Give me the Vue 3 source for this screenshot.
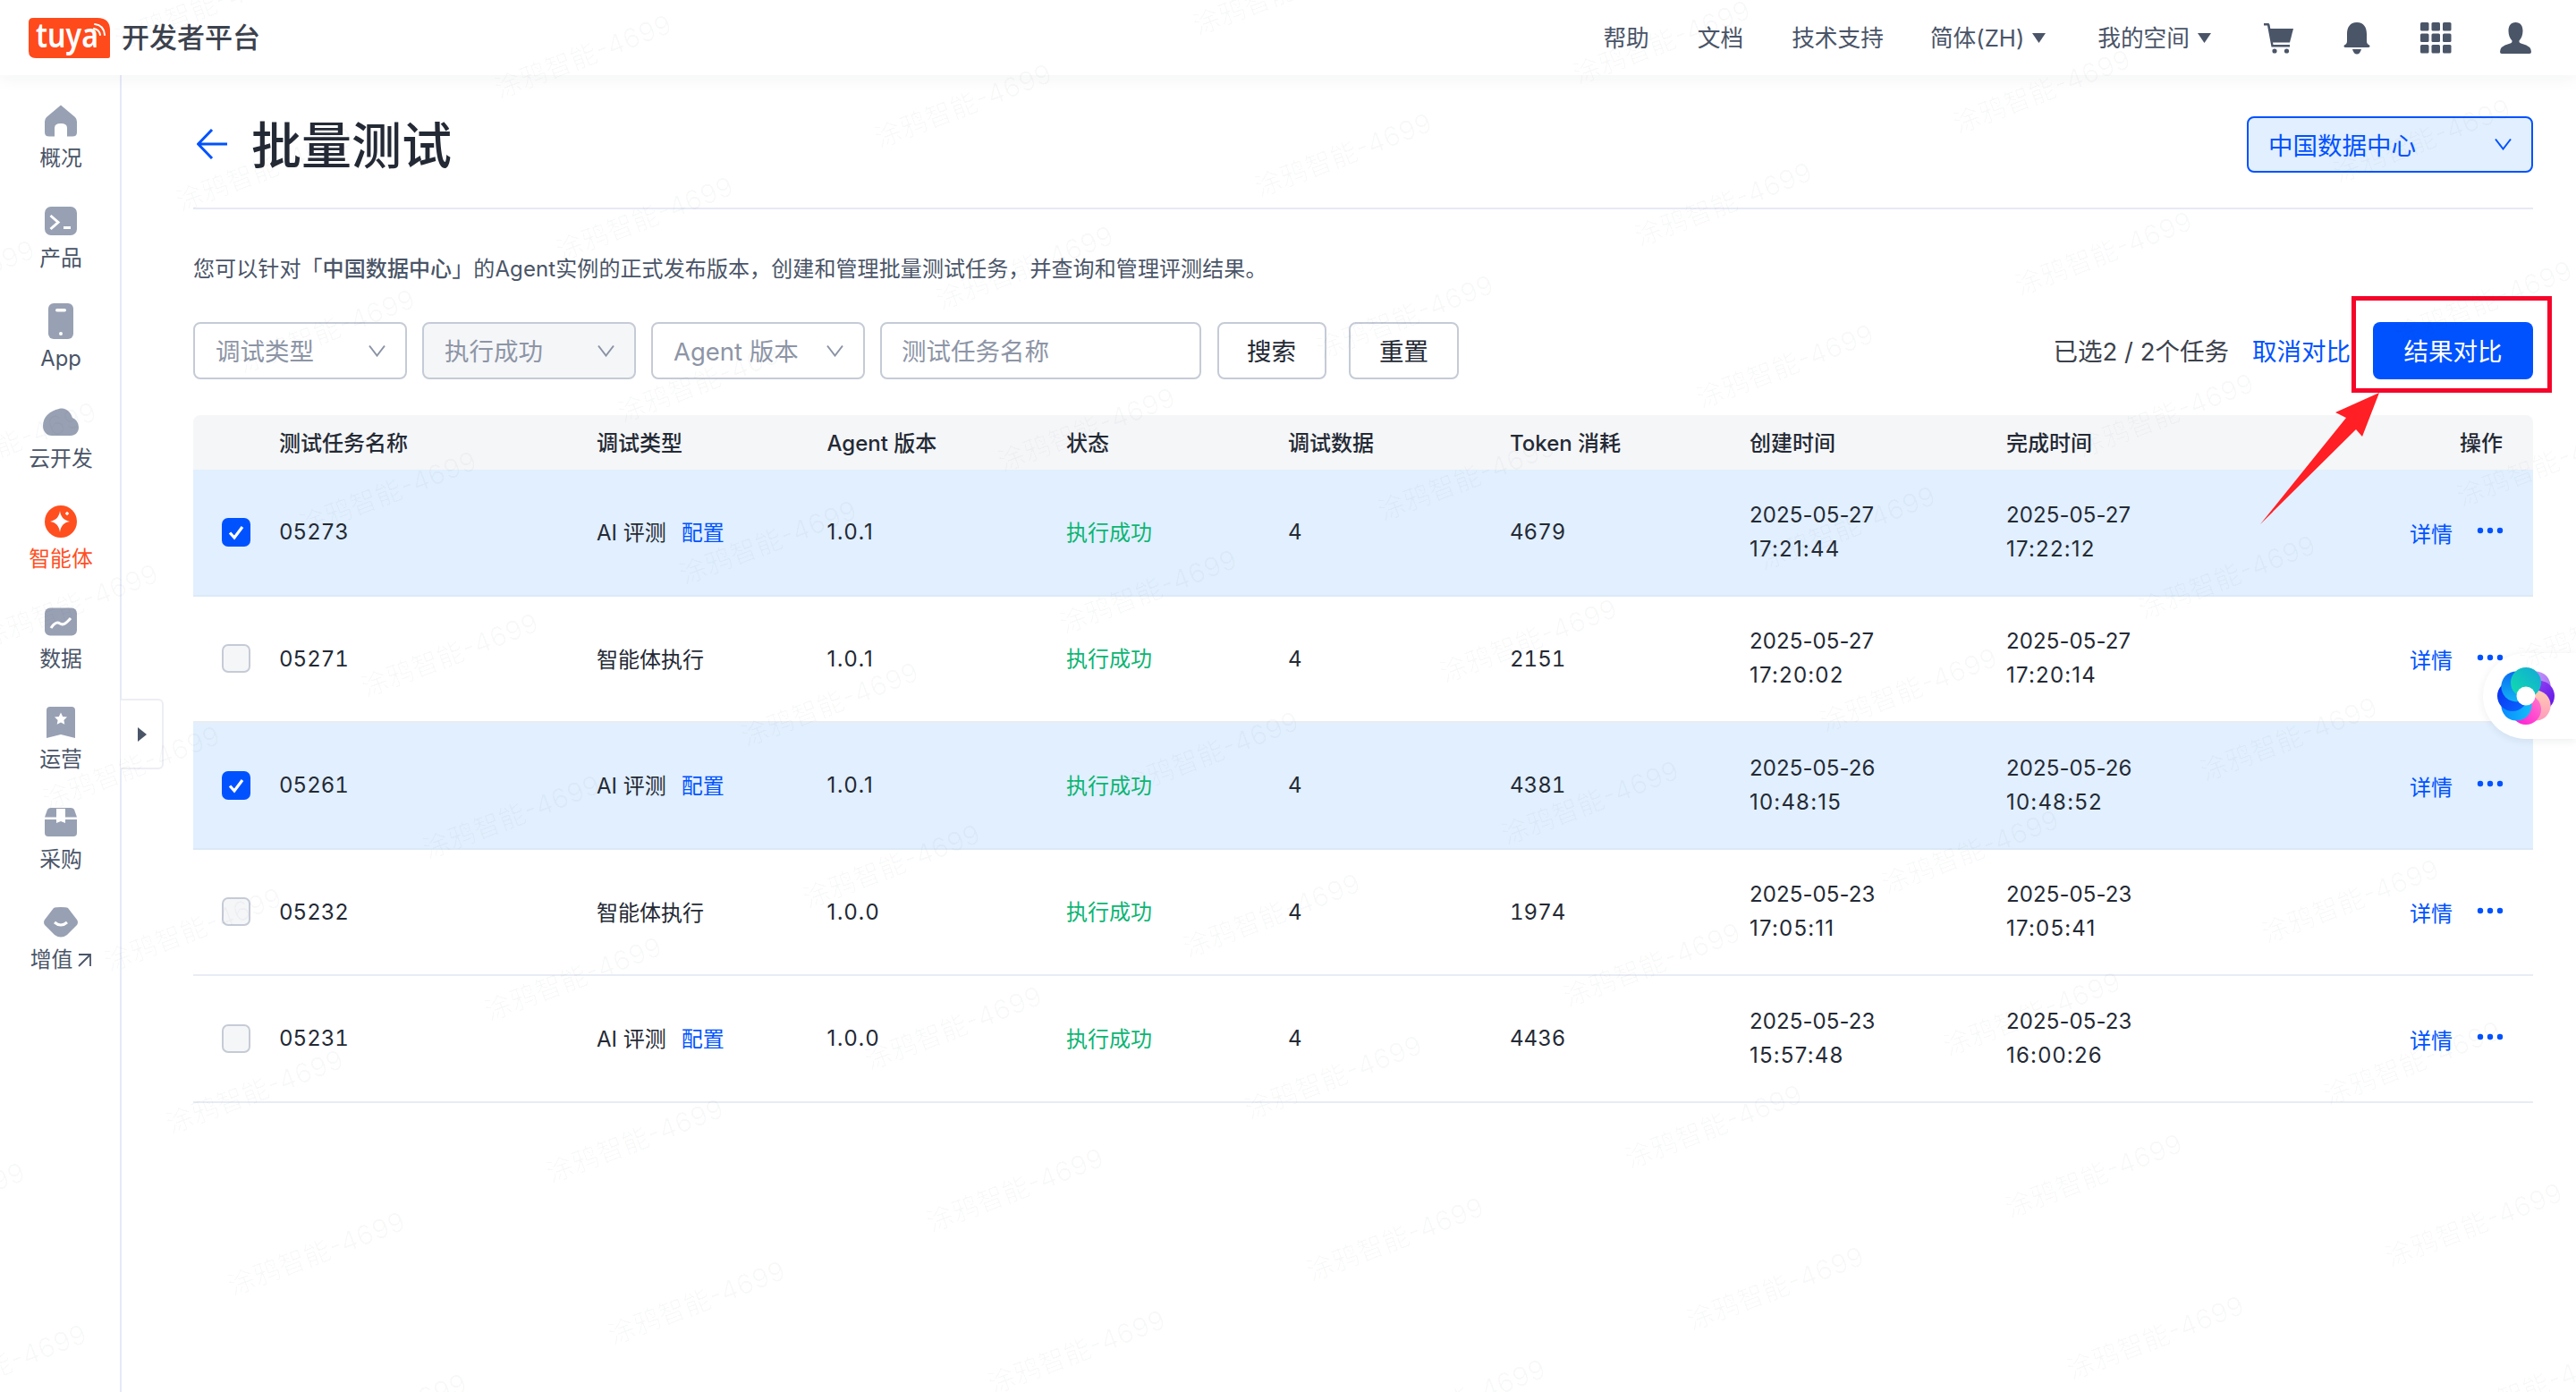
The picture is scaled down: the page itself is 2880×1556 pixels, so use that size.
<script setup>
const rows = [
  { id: '05273', type: 'AI 评测', config: true, ver: '1.0.1', token: '4679', c: ['2025-05-27', '17:21:44'], d: ['2025-05-27', '17:22:12'], on: true },
  { id: '05271', type: '智能体执行', config: false, ver: '1.0.1', token: '2151', c: ['2025-05-27', '17:20:02'], d: ['2025-05-27', '17:20:14'], on: false },
  { id: '05261', type: 'AI 评测', config: true, ver: '1.0.1', token: '4381', c: ['2025-05-26', '10:48:15'], d: ['2025-05-26', '10:48:52'], on: true },
  { id: '05232', type: '智能体执行', config: false, ver: '1.0.0', token: '1974', c: ['2025-05-23', '17:05:11'], d: ['2025-05-23', '17:05:41'], on: false },
  { id: '05231', type: 'AI 评测', config: true, ver: '1.0.0', token: '4436', c: ['2025-05-23', '15:57:48'], d: ['2025-05-23', '16:00:26'], on: false },
]
const heads = ['测试任务名称', '调试类型', 'Agent 版本', '状态', '调试数据', 'Token 消耗', '创建时间', '完成时间']
const filters = [
  { label: '调试类型', filled: false },
  { label: '执行成功', filled: true },
  { label: 'Agent 版本', filled: false },
]
const marks = []
for (let i = -4; i < 9; i++) {
  for (let j = -9; j < 3; j++) {
    const x = 353 + i * 425 + j * 69
    const y = 1399 + i * 55 + j * 181
    if (x > -150 && x < 3030 && y > -80 && y < 1640) marks.push({ x, y })
  }
}
const petals = [
  { a: 45, from: '#e6c4fb', to: '#a266f5' },
  { a: 90, from: '#a04df5', to: '#5a10e6' },
  { a: 135, from: '#ffd8b0', to: '#ff8fc0' },
  { a: 180, from: '#ff7fc8', to: '#ff12d8' },
  { a: 225, from: '#12c8f8', to: '#0a80ff' },
  { a: 270, from: '#0a6cff', to: '#0a28f0' },
  { a: 315, from: '#12c4f0', to: '#0a5cf5' },
  { a: 0, from: '#10e0a8', to: '#12a8d8' },
]
</script>

<template>
  <div class="page">
    <header class="topbar">
      <div class="brand">
        <svg class="logo" width="91" height="45" viewBox="0 0 91 45">
          <path d="M5 0H77Q91 0 91 14V43Q91 45 89 45H8Q0 45 0 37V5Q0 0 5 0Z" fill="#ff4a1c" />
          <text x="8" y="33" class="logo-text" textLength="70" lengthAdjust="spacingAndGlyphs">tuya</text>
          <path d="M73 12Q79 13 80 19M74 7Q84 8 85 19" fill="none" stroke="#fff" stroke-width="2" stroke-linecap="round" />
        </svg>
        <span class="brand-name">开发者平台</span>
      </div>
      <nav class="topnav">
        <span>帮助</span>
        <span>文档</span>
        <span>技术支持</span>
        <span class="drop first">简体(ZH)
          <svg width="15" height="11" viewBox="0 0 15 11"><path d="M0 0H15L7.500 11Z" fill="#4a5568" /></svg>
        </span>
        <span class="drop">我的空间
          <svg width="15" height="11" viewBox="0 0 15 11"><path d="M0 0H15L7.500 11Z" fill="#4a5568" /></svg>
        </span>
        <svg class="cart" width="33" height="34" viewBox="0 0 33 34" fill="#4a5568">
          <path d="M0 0H5.500L6.500 1.500L10.500 24H29V26.500H8.500L4 2.500H0Z" />
          <path d="M6.500 6H33L29 21.500H9.500Z" />
          <circle cx="12" cy="31" r="2.600" /><circle cx="25.500" cy="31" r="2.600" />
        </svg>
        <svg class="bell" width="30" height="36" viewBox="0 0 30 36" fill="#4a5568">
          <path d="M15 0C23 0 26 6 26 13V21Q26 24 29 25.500Q30.500 27.500 28 28H2Q-.5 27.500 1 25.500Q4 24 4 21V13C4 6 7 0 15 0Z" />
          <path d="M10 30H20Q18.500 35.500 15 35.500Q11.500 35.500 10 30Z" />
        </svg>
        <svg class="grid" width="35" height="35" viewBox="0 0 35 35" fill="#4a5568">
          <rect x="0" y="0" width="9.500" height="9.500" rx="1.500" /><rect x="12.500" y="0" width="9.500" height="9.500" rx="1.500" /><rect x="25" y="0" width="9.500" height="9.500" rx="1.500" />
          <rect x="0" y="12.500" width="9.500" height="9.500" rx="1.500" /><rect x="12.500" y="12.500" width="9.500" height="9.500" rx="1.500" /><rect x="25" y="12.500" width="9.500" height="9.500" rx="1.500" />
          <rect x="0" y="25" width="9.500" height="9.500" rx="1.500" /><rect x="12.500" y="25" width="9.500" height="9.500" rx="1.500" /><rect x="25" y="25" width="9.500" height="9.500" rx="1.500" />
        </svg>
        <svg width="35" height="35" viewBox="0 0 35 35" fill="#4a5568">
          <path d="M17.500 0C23 0 25.500 4 25.500 9.500C25.500 14 24 18 21.500 20.500V21.500Q21.500 23 25 24Q35 26.500 35 33Q35 35 33 35H2Q0 35 0 33Q0 26.500 10 24Q13.500 23 13.500 21.500V20.500C11 18 9.500 14 9.500 9.500C9.500 4 12 0 17.500 0Z" />
        </svg>
      </nav>
    </header>

    <div class="body">
      <aside class="sidebar">
        <div class="side-item">
          <svg class="side-icon" viewBox="0 0 40 40"><path d="M20 2.500L36 16Q38 18 38 21V33Q38 37.500 33 37.500H27V28Q27 23 20 23Q13 23 13 28V37.500H7Q2 37.500 2 33V21Q2 18 4 16Z" /></svg>
          <span class="side-label">概况</span>
        </div>
        <div class="side-item">
          <svg class="side-icon" viewBox="0 0 40 40"><rect x="2" y="4" width="36" height="32" rx="7" /><path d="M8.500 14L17 21.500L8.500 29" class="ink" /><path d="M23 27.500H31" class="ink" /></svg>
          <span class="side-label">产品</span>
        </div>
        <div class="side-item">
          <svg class="side-icon" viewBox="0 0 40 40"><rect x="6" y="0" width="28" height="40" rx="6" /><rect x="14" y="6" width="12" height="3.500" rx="1.700" fill="#fff" /><circle cx="20" cy="34" r="2" fill="#fff" /></svg>
          <span class="side-label">App</span>
        </div>
        <div class="side-item">
          <svg class="side-icon" viewBox="0 0 40 40"><path d="M10 36C4 36 0 31 0 25C0 15 8 8 18 6C26 4 31 10 33 16C38 18 40 23 40 27C40 32 36 36 31 36Z" /></svg>
          <span class="side-label">云开发</span>
        </div>
        <div class="side-item active">
          <svg class="side-icon" viewBox="0 0 40 40"><ellipse cx="20" cy="20" rx="18" ry="18" fill="#ff4f1f" /><path d="M19 8C20 15 23 18 30 20C23 21 20 25 19 32C18 25 15 21 8 20C15 18 18 15 19 8Z" fill="#fff" /><path d="M27 9V13M25 11H29" stroke="#fff" stroke-width="1.500" fill="none" /></svg>
          <span class="side-label">智能体</span>
        </div>
        <div class="side-item">
          <svg class="side-icon" viewBox="0 0 40 40"><rect x="2" y="4.500" width="36" height="31" rx="6" /><path d="M9 27C13 21 16 20 19 22C22 24 25 23 31 16" class="ink" /></svg>
          <span class="side-label">数据</span>
        </div>
        <div class="side-item">
          <svg class="side-icon" viewBox="0 0 40 40"><path d="M8 3H32Q36 3 36 7V38L20 34L4 38V7Q4 3 8 3Z" /><path d="M20 9.500L22.100 14L27 14.600L23.400 17.900L24.300 22.800L20 20.400L15.700 22.800L16.600 17.900L13 14.600L17.900 14Z" fill="#fff" /></svg>
          <span class="side-label">运营</span>
        </div>
        <div class="side-item">
          <svg class="side-icon" viewBox="0 0 40 40"><path d="M9 4H31Q34 4 35 6L38 14.500H2L5 6Q6 4 9 4Z" /><path d="M2 17H38V32Q38 36 34 36H6Q2 36 2 32Z" /><path d="M15 5H25V21L20 19L15 21Z" fill="#fff" /></svg>
          <span class="side-label">采购</span>
        </div>
        <div class="side-item">
          <svg class="side-icon" viewBox="0 0 40 40"><path d="M12 4Q14 3 20 3Q26 3 28 4L38 17Q40 20 38 23L27 34Q20 39 13 34L2 23Q0 20 2 17Z" /><path d="M13 20Q20 26 27 20" class="ink" /></svg>
          <span class="side-label">增值
            <svg width="15" height="15" viewBox="0 0 15 15"><path d="M1 1H14V14M14 1L1 14" fill="none" stroke="#4a5568" stroke-width="1.800" /></svg>
          </span>
        </div>
      </aside>

      <main class="main">
        <div class="page-head">
          <div class="title-wrap">
            <svg class="back" width="34" height="34" viewBox="0 0 34 34"><path d="M17 1L1.500 17L17 33M1.500 17H34" fill="none" stroke="#0052ff" stroke-width="3" /></svg>
            <h1 class="title">批量测试</h1>
          </div>
          <div class="region">
            <span>中国数据中心</span>
            <svg width="19" height="14" viewBox="0 0 19 14"><path d="M1 1.500L9.500 12.500L18 1.500" fill="none" stroke="#0052ff" stroke-width="2" /></svg>
          </div>
        </div>

        <p class="desc">您可以针对「<b>中国数据中心</b>」的Agent实例的正式发布版本，创建和管理批量测试任务，并查询和管理评测结果。</p>

        <div class="toolbar">
          <div v-for="f in filters" :key="f.label" class="select" :class="{ filled: f.filled }">
            <span class="ph">{{ f.label }}</span>
            <svg width="19" height="14" viewBox="0 0 19 14"><path d="M1 1.500L9.500 12.500L18 1.500" fill="none" stroke="#8a93a6" stroke-width="2" /></svg>
          </div>
          <div class="input"><span class="ph">测试任务名称</span></div>
          <button class="btn">搜索</button>
          <button class="btn reset">重置</button>
          <div class="tool-right">
            <span class="count">已选2 / 2个任务</span>
            <span class="cancel">取消对比</span>
            <button class="primary">结果对比</button>
          </div>
        </div>

        <div class="table">
          <div class="tr thead">
            <div></div>
            <div v-for="h in heads" :key="h" class="th">{{ h }}</div>
            <div class="th op-head">操作</div>
          </div>
          <div v-for="r in rows" :key="r.id" class="tr row" :class="{ on: r.on }">
            <div class="check-cell">
              <span class="check" :class="{ checked: r.on }">
                <svg v-if="r.on" width="20" height="18" viewBox="0 0 20 18"><path d="M3 9.500L8 15L17 3" fill="none" stroke="#fff" stroke-width="3.200" /></svg>
              </span>
            </div>
            <div class="num">{{ r.id }}</div>
            <div class="type">
              <span>{{ r.type }}</span>
              <span v-if="r.config" class="link">配置</span>
            </div>
            <div class="ver">{{ r.ver }}</div>
            <div class="ok">执行成功</div>
            <div class="num">4</div>
            <div class="num">{{ r.token }}</div>
            <div class="dt"><div class="date">{{ r.c[0] }}</div><div class="time">{{ r.c[1] }}</div></div>
            <div class="dt"><div class="date">{{ r.d[0] }}</div><div class="time">{{ r.d[1] }}</div></div>
            <div class="ops">
              <span class="link">详情</span>
              <svg width="30" height="8" viewBox="0 0 30 8" fill="#0052ff"><circle cx="4" cy="4" r="3.200" /><circle cx="15" cy="4" r="3.200" /><circle cx="26" cy="4" r="3.200" /></svg>
            </div>
          </div>
        </div>
      </main>
    </div>

    <div class="collapse">
      <svg width="10" height="16" viewBox="0 0 10 16"><path d="M0 0L10 8L0 16Z" fill="#4a5568" /></svg>
    </div>

    <div class="bubble">
      <svg width="64" height="64" viewBox="-32 -32 64 64">
        <defs>
          <linearGradient v-for="(p, i) in petals" :id="'pt' + i" :key="i" x1="0" y1="1" x2="1" y2="0">
            <stop offset="0" :stop-color="p.from" />
            <stop offset="1" :stop-color="p.to" />
          </linearGradient>
        </defs>
        <circle v-for="(p, i) in petals" :key="i" cx="0" cy="-15" r="17" :fill="'url(#pt' + i + ')'" :transform="'rotate(' + p.a + ')'" />
        <circle cx="0" cy="0" r="10.500" fill="#fff" />
      </svg>
    </div>

    <svg class="annot" width="2880" height="1556" viewBox="0 0 2880 1556">
      <rect x="2631.500" y="333.500" width="219" height="103" fill="none" stroke="#f5052a" stroke-width="5" />
      <path d="M2660 439L2641 488L2634 480L2527 586L2623 467L2611 461Z" fill="#ff1f24" />
    </svg>

    <div class="watermarks">
      <span v-for="(m, i) in marks" :key="i" class="wm" :style="{ left: m.x + 'px', top: m.y + 'px' }">涂鸦智能-4699</span>
    </div>
  </div>
</template>

<style scoped>
.page {
  position: relative;
  width: 2880px;
  height: 1556px;
  overflow: hidden;
  background: #fff;
  color: #242a35;
  font-family: Inter, "Noto Sans CJK SC", sans-serif;
  font-size: 24px;
}
.topbar {
  position: relative;
  z-index: 2;
  height: 84px;
  display: flex;
  align-items: center;
  padding: 0 50px 0 32px;
  background: #fff;
  box-shadow: 0 4px 18px rgba(20, 30, 50, 0.05);
}
.brand { display: flex; align-items: center; gap: 13px; }
.logo { display: block; margin-top: 1px; }
.logo-text { font-family: "Noto Sans", sans-serif; font-weight: 600; font-size: 38px; fill: #fff; }
.brand-name { font-size: 31px; color: #3c424d; font-weight: 500; line-height: 40px; }
.topnav {
  margin-left: auto;
  display: flex;
  align-items: center;
  gap: 54px;
  font-size: 25.700px;
  color: #4a5568;
  line-height: 40px;
  padding-top: 1px;
}
.drop { display: flex; align-items: center; gap: 9px; }
.drop.first { margin-left: -2px; margin-right: 4px; }
.cart { margin-left: 5px; }
.bell, .grid { margin-left: 2px; }
.body { display: flex; height: 1472px; }
.sidebar {
  width: 136px;
  flex: none;
  box-sizing: border-box;
  border-right: 2px solid #e6eaf6;
  padding: 31px 0 0 2px;
}
.side-item {
  height: 112px;
  display: flex;
  flex-direction: column;
  align-items: center;
}
.side-icon { width: 40px; height: 40px; fill: #98a1b3; display: block; flex: none; }
.ink { fill: none; stroke: #fff; stroke-width: 3; }
.side-label {
  margin-top: 6px;
  line-height: 32px;
  font-size: 23.800px;
  color: #4a5568;
  display: flex;
  align-items: center;
  gap: 6px;
}
.active .side-label { color: #ff4f1f; }
.main { flex: 1; padding: 0 48px 0 80px; min-width: 0; }
.page-head {
  height: 150px;
  box-sizing: border-box;
  padding-top: 6px;
  border-bottom: 2px solid #e6eaf6;
  display: flex;
  align-items: center;
  justify-content: space-between;
}
.title-wrap { display: flex; align-items: center; gap: 27px; }
.back { display: block; margin-left: 4px; }
.title { margin: 0; font-size: 56px; line-height: 64px; padding-top: 4px; font-weight: 500; color: #242a35; }
.region {
  width: 320px;
  height: 63px;
  box-sizing: border-box;
  border: 2px solid #0052ff;
  border-radius: 8px;
  background: #e2effe;
  color: #0052ff;
  font-size: 27.500px;
  display: flex;
  align-items: center;
  justify-content: space-between;
  padding: 0 22px;
}
.desc { margin: 49px 0 0; font-size: 24px; line-height: 36px; color: #4a5568; letter-spacing: 0.1px; }
.desc b { font-weight: 500; }
.toolbar { margin-top: 41px; height: 64px; display: flex; align-items: stretch; gap: 17.500px; font-size: 27.500px; }
.select {
  width: 238.500px;
  box-sizing: border-box;
  border: 2px solid #c5cbd6;
  border-radius: 8px;
  padding: 0 22px 0 23px;
  display: flex;
  align-items: center;
  justify-content: space-between;
}
.ph { color: #8d95a6; margin-top: -3px; }
.select.filled { background: #f5f6f8; }
.input {
  width: 359px;
  box-sizing: border-box;
  border: 2px solid #c5cbd6;
  border-radius: 8px;
  padding: 0 22px;
  display: flex;
  align-items: center;
}
.btn {
  width: 122px;
  box-sizing: border-box;
  background: #fff;
  border: 2px solid #c5cbd6;
  border-radius: 8px;
  font: inherit;
  color: #242a35;
  padding: 0 0 3px;
}
.btn.reset { margin-left: 8px; width: 123px; }
.tool-right { margin-left: auto; display: flex; align-items: center; }
.count { color: #3c424d; margin-top: -3px; }
.cancel { margin-left: 26px; color: #0052ff; margin-top: -3px; }
.primary {
  margin-left: 25px;
  width: 179px;
  height: 64px;
  border: 0;
  border-radius: 8px;
  background: #0052ff;
  color: #fff;
  font: inherit;
  padding: 0 0 3px;
}
.table { margin-top: 40px; }
.tr {
  display: grid;
  grid-template-columns: 96px 355px 257.500px 267.500px 248px 248px 268px 287px 389px 200px;
  align-items: center;
}
.thead {
  height: 61px;
  background: #f5f6f8;
  border-radius: 8px 8px 0 0;
}
.th { font-weight: 500; color: #242a35; margin-top: -3px; }
.op-head { text-align: right; padding-right: 34px; }
.row {
  height: 141.500px;
  box-sizing: border-box;
  border-bottom: 2px solid #e8ecf4;
}
.row.on { background: #e1effe; border-bottom-color: #dbe9f7; }
.check-cell { padding-left: 32px; display: flex; }
.check {
  width: 32px;
  height: 32px;
  box-sizing: border-box;
  border: 2px solid #c5cbd6;
  border-radius: 7px;
  background: #f5f6f8;
  display: flex;
  align-items: center;
  justify-content: center;
}
.check.checked { background: #0052ff; border-color: #0052ff; }
.num { font-variant-numeric: tabular-nums; }
.ver { letter-spacing: 1.500px; }
.type { display: flex; gap: 17px; margin-top: -2px; }
.link { color: #0052ff; }
.ok { color: #0cb573; margin-top: -3px; }
.dt { line-height: 38px; }
.date { letter-spacing: 0.1px; }
.time { letter-spacing: 1.200px; }
.ops {
  display: flex;
  align-items: center;
  justify-content: flex-end;
  gap: 27px;
  padding-right: 33px;
}
.ops .link { margin-top: 1px; }
.ops svg { margin-top: -3px; }
.collapse {
  position: absolute;
  left: 135px;
  top: 781px;
  width: 48px;
  height: 79px;
  box-sizing: border-box;
  background: #fff;
  border: 2px solid #eceef3;
  border-left: 0;
  border-radius: 0 6px 6px 0;
  display: flex;
  align-items: center;
  justify-content: center;
  padding-left: 2px;
}
.bubble {
  position: absolute;
  right: 0;
  top: 730px;
  width: 104px;
  height: 96px;
  box-sizing: border-box;
  padding-left: 16px;
  background: #fff;
  border-radius: 48px 0 0 48px;
  box-shadow: 0 2px 10px rgba(30, 40, 70, 0.08);
  display: flex;
  align-items: center;
  z-index: 3;
}
.annot { position: absolute; left: 0; top: 0; z-index: 4; pointer-events: none; }
.watermarks { position: absolute; inset: 0; z-index: 5; pointer-events: none; }
.wm {
  position: absolute;
  transform: translate(-50%, -50%) rotate(-21deg);
  font-size: 30px;
  white-space: nowrap;
  color: rgba(30, 40, 60, 0.028);
}
</style>
